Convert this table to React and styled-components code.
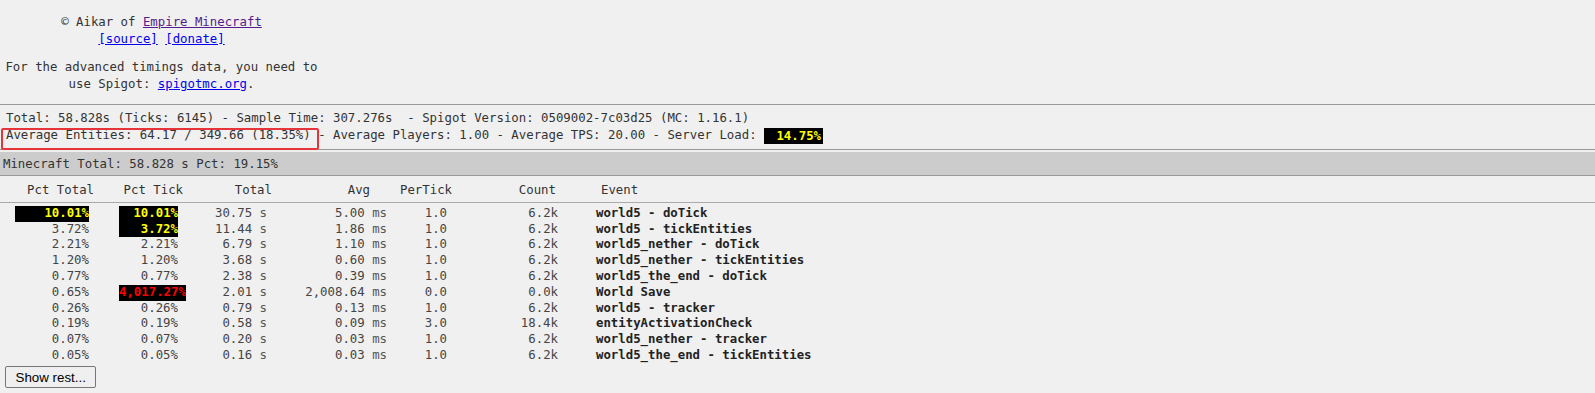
import styled, { createGlobalStyle } from "styled-components";

const GlobalStyle = createGlobalStyle`
    html, body {
        margin: 0;
        padding: 0;
        background-color: #F0F0F0;
    }

    body {
        font-family: "DejaVu Sans Mono", "Liberation Mono", monospace;
        font-size: 12.35px;
        color: #333333;
    }
`;

const columns = [
    { width: 96, hpad: 2, dpad: 7, box: 74 },
    { width: 90, hpad: 3, dpad: 8, box: 59 },
    { width: 89, hpad: 3, dpad: 8 },
    { width: 117, hpad: 22, dpad: 5 },
    { width: 68, hpad: 8, dpad: 13 },
    { width: 106, hpad: 10, dpad: 8 },
];

const headers = ['Pct Total', 'Pct Tick', 'Total', 'Avg', 'PerTick', 'Count'];

const rows = [
    { pctTotal: '10.01%', totalMark: 'yellow', pctTick: '10.01%', tickMark: 'yellow', total: '30.75', avg: '5.00', perTick: '1.0', count: '6.2k', event: 'world5 - doTick' },
    { pctTotal: '3.72%', pctTick: '3.72%', tickMark: 'yellow', total: '11.44', avg: '1.86', perTick: '1.0', count: '6.2k', event: 'world5 - tickEntities' },
    { pctTotal: '2.21%', pctTick: '2.21%', total: '6.79', avg: '1.10', perTick: '1.0', count: '6.2k', event: 'world5_nether - doTick' },
    { pctTotal: '1.20%', pctTick: '1.20%', total: '3.68', avg: '0.60', perTick: '1.0', count: '6.2k', event: 'world5_nether - tickEntities' },
    { pctTotal: '0.77%', pctTick: '0.77%', total: '2.38', avg: '0.39', perTick: '1.0', count: '6.2k', event: 'world5_the_end - doTick' },
    { pctTotal: '0.65%', pctTick: '4,017.27%', tickMark: 'red', total: '2.01', avg: '2,008.64', perTick: '0.0', count: '0.0k', event: 'World Save' },
    { pctTotal: '0.26%', pctTick: '0.26%', total: '0.79', avg: '0.13', perTick: '1.0', count: '6.2k', event: 'world5 - tracker' },
    { pctTotal: '0.19%', pctTick: '0.19%', total: '0.58', avg: '0.09', perTick: '3.0', count: '18.4k', event: 'entityActivationCheck' },
    { pctTotal: '0.07%', pctTick: '0.07%', total: '0.20', avg: '0.03', perTick: '1.0', count: '6.2k', event: 'world5_nether - tracker' },
    { pctTotal: '0.05%', pctTick: '0.05%', total: '0.16', avg: '0.03', perTick: '1.0', count: '6.2k', event: 'world5_the_end - tickEntities' },
];

function Cell({ col, mark, children }) {
    const spec = columns[col];
    return (
        <DataCell $pad={spec.dpad}>
            {mark ? (
                <MarkBox $width={spec.box}>
                    <Mark $color={mark}>{children}</Mark>
                </MarkBox>
            ) : children}
        </DataCell>
    );
}

export default function App() {
    return (
        <>
            <GlobalStyle />
            <Credits>
                <p>
                    © Aikar of <Link href="#" $visited>Empire Minecraft</Link>
                    <br />
                    <Link href="#">[source]</Link> <Link href="#">[donate]</Link>
                </p>
                <p className="notice">
                    For the advanced timings data, you need to use Spigot: <Link href="#">spigotmc.org</Link>.
                </p>
            </Credits>

            <Rule />

            <Summary>
                <div>Total: 58.828s (Ticks: 6145) - Sample Time: 307.276s  - Spigot Version: 0509002-7c03d25 (MC: 1.16.1)</div>
                <div>
                    <Annotated>Average Entities: 64.17 / 349.66 (18.35%)</Annotated>
                    {' - Average Players: 1.00 - Average TPS: 20.00 - Server Load: '}
                    <Badge>14.75%</Badge>
                </div>
            </Summary>

            <Rule className="tight" />

            <Band>Minecraft Total: 58.828 s Pct: 19.15%</Band>

            <HeaderRow>
                {headers.map((h, i) => (
                    <HeadCell key={h} $pad={columns[i].hpad}>{h}</HeadCell>
                ))}
                <HeadEvent>Event</HeadEvent>
            </HeaderRow>

            <Body>
                {rows.map(r => (
                    <Row key={r.event}>
                        <Cell col={0} mark={r.totalMark}>{r.pctTotal}</Cell>
                        <Cell col={1} mark={r.tickMark}>{r.pctTick}</Cell>
                        <Cell col={2}>{r.total} <Unit>s</Unit></Cell>
                        <Cell col={3}>{r.avg} <Unit>ms</Unit></Cell>
                        <Cell col={4}>{r.perTick}</Cell>
                        <Cell col={5}>{r.count}</Cell>
                        <EventCell>{r.event}</EventCell>
                    </Row>
                ))}
            </Body>

            <ShowRest type="button">Show rest...</ShowRest>
        </>
    );
}

const Credits = styled.div`
    width: 315px;
    margin-left: 4px;
    padding-top: 13.5px;
    text-align: center;
    line-height: 17px;

    p{
        margin: 0;
    }

    .notice{
        margin-top: 11.5px;
    }
`;

const Link = styled.a`
    color: ${p => p.$visited ? '#551A8B' : '#0000EE'};
    text-decoration: underline;
`;

const Rule = styled.hr`
    height: 0;
    margin: 10.5px 0 4.5px;
    border: none;
    border-top: 1px solid #9A9A9A;
    border-bottom: 1px solid #EEEEEE;

    &.tight{
        margin: 4.5px 0 1px;
    }
`;

const Summary = styled.div`
    padding-left: 6px;
    line-height: 17px;
    white-space: pre;
`;

const Annotated = styled.span`
    position: relative;

    &::after{
        content: "";
        position: absolute;
        top: 0;
        bottom: -7.5px;
        left: -5.5px;
        right: -8.5px;
        border: 2px solid #E5343A;
        border-radius: 2px;
        pointer-events: none;
    }
`;

const Badge = styled.span`
    display: inline-block;
    box-sizing: border-box;
    width: 59px;
    padding-right: 2px;
    background-color: #000000;
    color: #FFFF00;
    font-weight: bold;
    text-align: right;
    line-height: 16.5px;
    vertical-align: top;
    margin-top: 0.5px;
`;

const Band = styled.div`
    height: 23px;
    padding-left: 3px;
    line-height: 24px;
    background-color: #CCCCCC;
    border-bottom: 1px solid #999999;
    color: #333333;
`;

const grid = `
    display: grid;
    grid-template-columns: ${columns.map(c => c.width + 'px').join(' ')} 1fr;
`;

const HeaderRow = styled.div`
    ${grid}
    height: 27px;
    padding-top: 2px;
    box-sizing: border-box;
    line-height: 25px;
    border-bottom: 1px solid #AAAAAA;
    color: #333333;
`;

const HeadCell = styled.div`
    text-align: right;
    padding-right: ${p => p.$pad}px;
    white-space: nowrap;
`;

const HeadEvent = styled.div`
    padding-left: 35px;
`;

const Body = styled.div`
    padding-top: 3.2px;
`;

const Row = styled.div`
    ${grid}
    height: 15.82px;
    line-height: 15.82px;
    color: #444444;
`;

const DataCell = styled.div`
    text-align: right;
    padding-right: ${p => p.$pad}px;
    white-space: nowrap;
`;

const MarkBox = styled.span`
    display: inline-block;
    width: ${p => p.$width}px;
    text-align: left;
    vertical-align: top;
`;

const Mark = styled.span`
    display: inline-block;
    min-width: 100%;
    text-align: right;
    vertical-align: top;
    background-color: #000000;
    color: ${p => p.$color === 'red' ? '#FF0000' : '#FFFF00'};
    font-weight: bold;
`;

const Unit = styled.span`
    color: #555555;
`;

const EventCell = styled.div`
    padding-left: 30px;
    font-weight: bold;
    color: #222222;
    white-space: nowrap;
`;

const ShowRest = styled.button`
    display: block;
    margin: 2.5px 0 0 5px;
    height: 22px;
    padding: 0 9.5px;
    font-family: "Liberation Sans", Arial, sans-serif;
    font-size: 13.33px;
    color: #000000;
    background-color: #EFEFEF;
    border: 1px solid #767676;
    border-radius: 2px;
`;
